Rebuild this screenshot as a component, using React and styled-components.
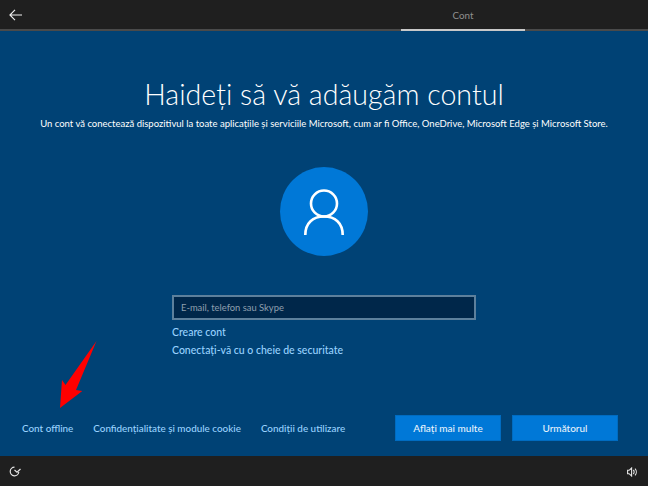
import styled, { createGlobalStyle } from 'styled-components';

const GlobalStyle = createGlobalStyle`
  html, body {
    margin: 0;
    padding: 0;
    background: #004275;
  }
  * { box-sizing: border-box; }
`

const Screen = styled.div`
  width: 648px;
  height: 486px;
  display: flex;
  flex-direction: column;
  position: relative;
  overflow: hidden;
  background: #004275;
  color: #fff;
  font-family: Lato, "Liberation Sans", sans-serif;
`

const TopBar = styled.header`
  height: 31px;
  flex: none;
  display: flex;
  justify-content: space-between;
  background: #1f1f1f;
  border-bottom: 2px solid #4a4a4a;
`

const BackButton = styled.button`
  width: 30px;
  height: 29px;
  padding: 0 0 0 9px;
  display: flex;
  align-items: center;
  border: 0;
  background: transparent;
`

const Tab = styled.div`
  width: 124px;
  height: 31px;
  margin-right: 123px;
  padding-top: 8px;
  text-align: center;
  font-size: 9.8px;
  line-height: 15px;
  color: #8f8f8f;
  border-bottom: 2px solid #c8c8c8;
`

const Main = styled.main`
  flex: 1;
  display: flex;
  flex-direction: column;
  align-items: center;
  padding: 44px 0 15px;
`

const Title = styled.h1`
  margin: 0;
  font-size: 28.6px;
  font-weight: 300;
  line-height: 38px;
  white-space: nowrap;
`

const Subtitle = styled.p`
  margin: 3px 0 0;
  font-size: 9.5px;
  line-height: 15px;
  white-space: nowrap;
`

const Avatar = styled.div`
  width: 88px;
  height: 89px;
  margin-top: 36px;
  display: flex;
  align-items: center;
  justify-content: center;
  border-radius: 50%;
  background: #0078d7;
`

const Form = styled.form`
  width: 304px;
  margin-top: 39px;
  display: flex;
  flex-direction: column;
`

const EmailInput = styled.input`
  width: 100%;
  height: 25px;
  padding: 0 7px;
  border: 2px solid #5d809c;
  background: #00274a;
  color: #fff;
  font-family: inherit;
  font-size: 9.4px;
  outline: none;

  &::placeholder {
    color: #8f9fae;
    opacity: 1;
  }
`

const LinkText = styled.a`
  display: block;
  font-size: 9.9px;
  font-weight: 500;
  line-height: 14px;
  color: #99d2ff;
  white-space: nowrap;
`

const FormLink = styled(LinkText)`
  margin-top: ${(props) => props.$gap}px;
  font-size: 10.5px;
`

const Actions = styled.div`
  width: 100%;
  margin-top: auto;
  padding: 0 30px 0 22px;
  display: flex;
  align-items: center;
`

const FooterLinks = styled.nav`
  flex: 1;
  display: flex;
  gap: 20px;
`

const Button = styled.button`
  width: 106px;
  height: 26px;
  margin-left: ${(props) => props.$gap}px;
  padding: 0;
  border: 1px solid #006cc1;
  background: #0078d7;
  color: #e6f2fb;
  font-family: inherit;
  font-size: 10px;
  font-weight: 500;
`

const BottomBar = styled.footer`
  height: 30px;
  flex: none;
  display: flex;
  align-items: center;
  justify-content: space-between;
  padding: 1px 11px 0 9px;
  background: #1f1f1f;
`

const Pointer = styled.svg`
  position: absolute;
  left: 56px;
  top: 338px;
`

export default function App() {
  return (
    <Screen>
      <GlobalStyle />
      <TopBar>
        <BackButton aria-label="Înapoi">
          <svg width="13" height="12" viewBox="0 0 13 12" fill="none" stroke="#f2f2f2" strokeWidth="1.1">
            <path d="M6 .8 .9 6 6 11.2M1 6h12" />
          </svg>
        </BackButton>
        <Tab>Cont</Tab>
      </TopBar>

      <Main>
        <Title>Haideți să vă adăugăm contul</Title>
        <Subtitle>Un cont vă conectează dispozitivul la toate aplicațiile și serviciile Microsoft, cum ar fi Office, OneDrive, Microsoft Edge și Microsoft Store.</Subtitle>
        <Avatar>
          <svg width="40" height="46" viewBox="0 0 40 46" fill="none" stroke="#fff" strokeWidth="2.6">
            <circle cx="20" cy="14.500" r="13" />
            <path d="M1.300 46C1.300 34 9 27.500 20 27.500S38.700 34 38.700 46" />
          </svg>
        </Avatar>
        <Form>
          <EmailInput placeholder="E-mail, telefon sau Skype" />
          <FormLink $gap={5}>Creare cont</FormLink>
          <FormLink $gap={4}>Conectați-vă cu o cheie de securitate</FormLink>
        </Form>
        <Actions>
          <FooterLinks>
            <LinkText>Cont offline</LinkText>
            <LinkText>Confidențialitate și module cookie</LinkText>
            <LinkText>Condiții de utilizare</LinkText>
          </FooterLinks>
          <Button>Aflați mai multe</Button>
          <Button $gap={11}>Următorul</Button>
        </Actions>
      </Main>

      <BottomBar>
        <svg width="12" height="11" viewBox="0 0 12 11" fill="none" stroke="#e6e6e6" strokeWidth="1.2">
          <path d="M5.500 1.200A4.300 4.300 0 1 0 9.800 6" />
          <path d="M5.500 4 8 6.300 11.500 3" />
        </svg>
        <svg width="10" height="10" viewBox="0 0 10 10" fill="none" stroke="#e6e6e6" strokeWidth="1.100">
          <path d="M.6 3.300h1.500L4.600 1v8L2.100 6.700H.6z" />
          <path d="M6.300 3a2.800 2.800 0 0 1 0 4M8 1.700a4.800 4.800 0 0 1 0 6.600" />
        </svg>
      </BottomBar>

      <Pointer width="44" height="72" viewBox="0 0 44 72">
        <path d="M4 70 6 42 9.500 47 40.500 3 20 52 26.300 53Z" fill="#ff0000" />
      </Pointer>
    </Screen>
  )
}
